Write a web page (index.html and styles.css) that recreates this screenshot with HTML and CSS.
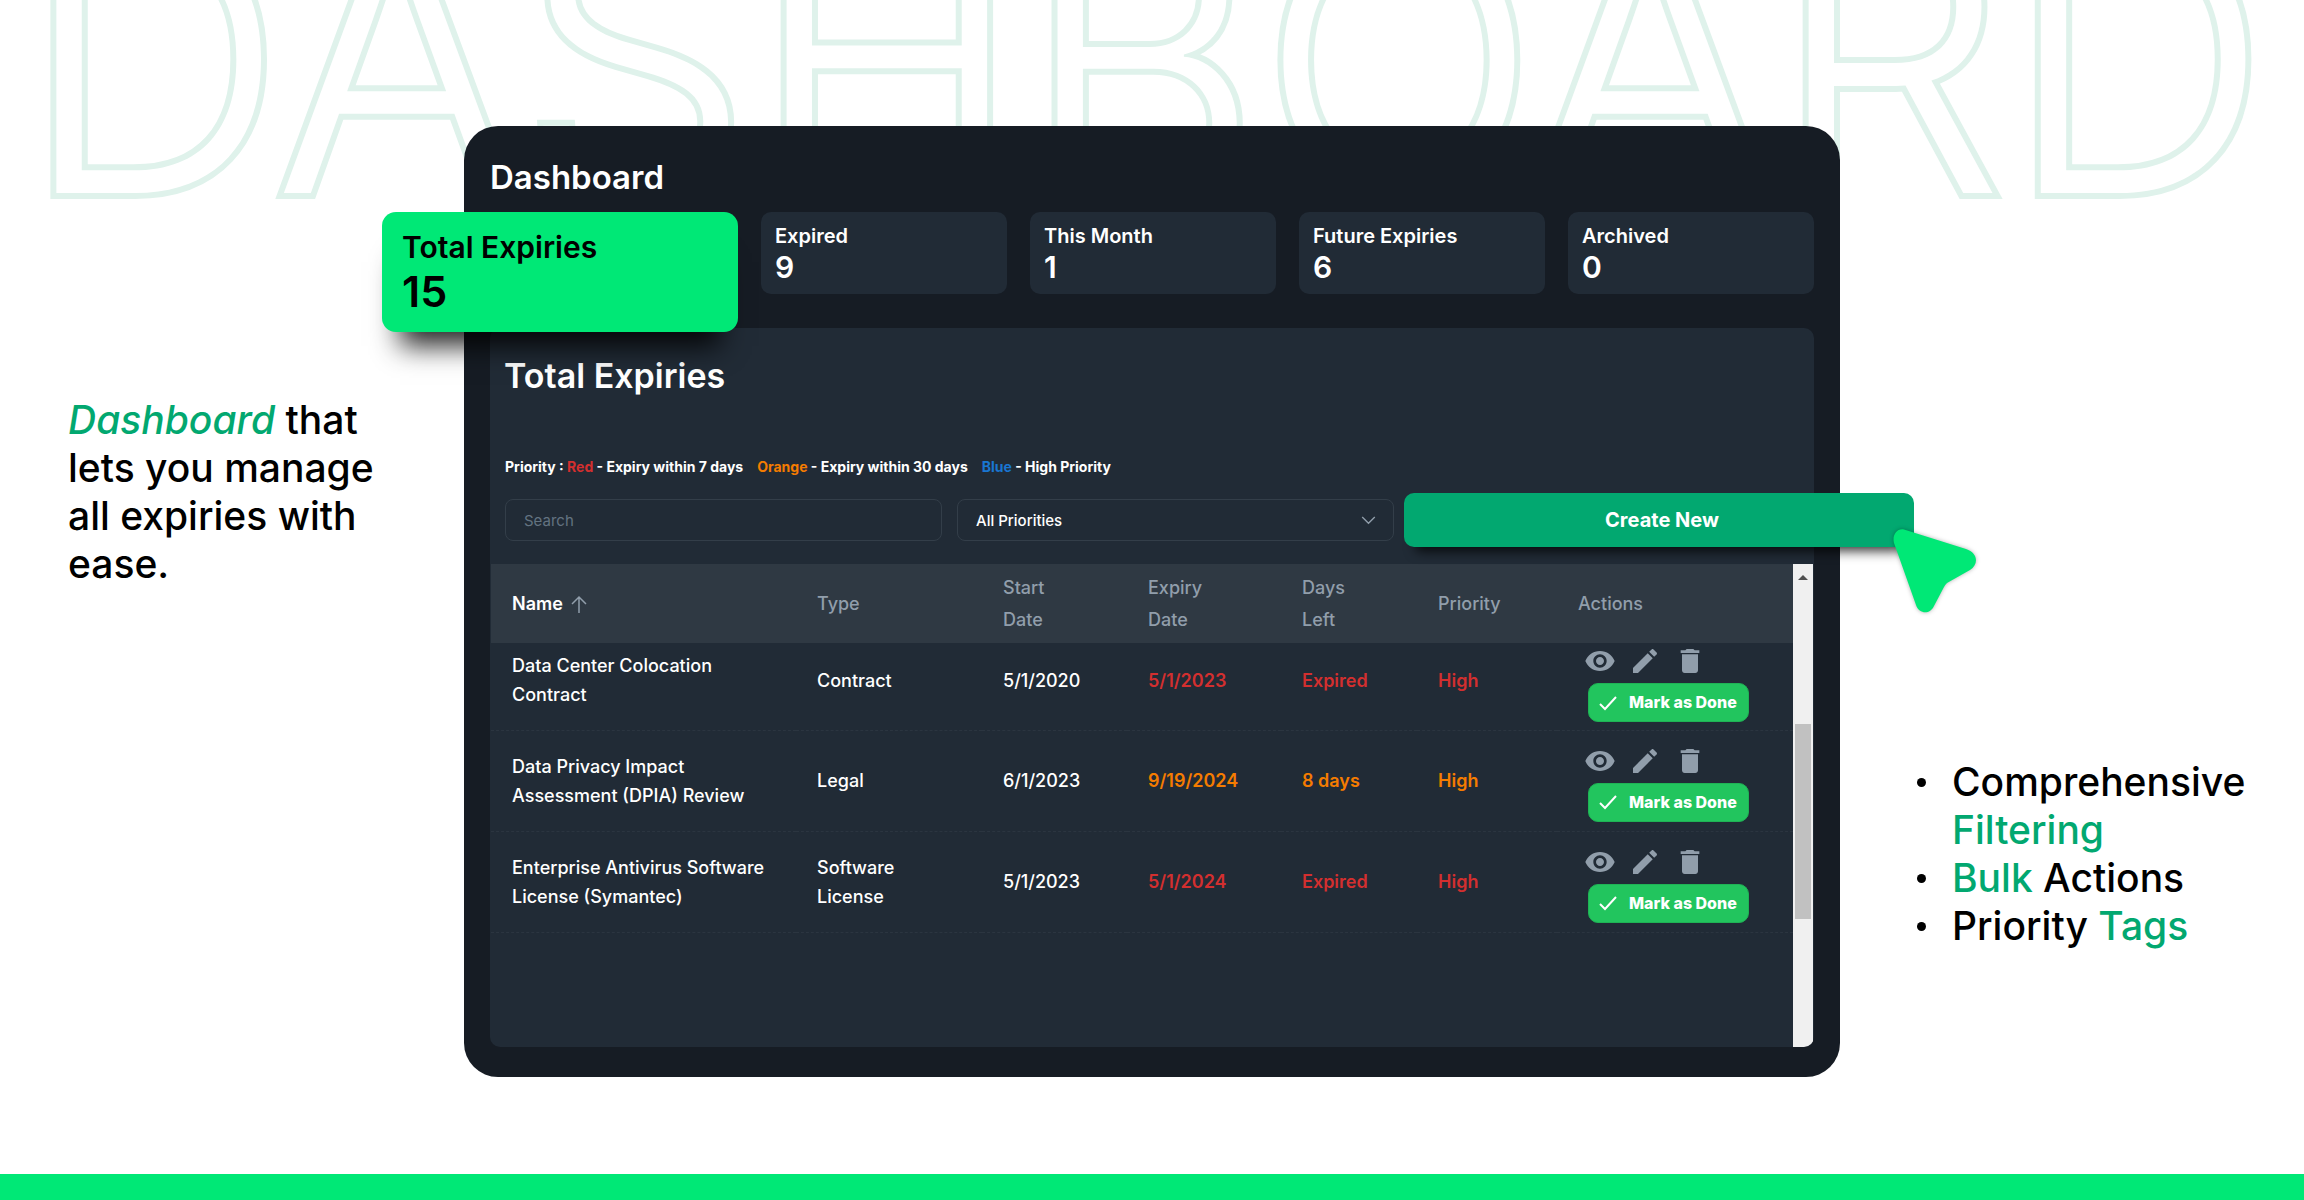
FILE: index.html
```html
<!DOCTYPE html>
<html lang="en">
<head>
<meta charset="utf-8">
<title>Dashboard</title>
<link rel="stylesheet" href="styles.css">
</head>
<body>
<svg class="sprite" aria-hidden="true">
  <symbol id="eye" viewBox="0 0 24 24"><path d="M12 4.500C7 4.500 2.730 7.610 1 12c1.730 4.390 6 7.500 11 7.500s9.270-3.110 11-7.500c-1.730-4.390-6-7.500-11-7.500zM12 17c-2.760 0-5-2.240-5-5s2.240-5 5-5 5 2.240 5 5-2.240 5-5 5zm0-8c-1.660 0-3 1.340-3 3s1.340 3 3 3 3-1.340 3-3-1.340-3-3-3z"/></symbol>
  <symbol id="pencil" viewBox="0 0 24 24"><path d="M3 17.250V21h3.750L17.810 9.940l-3.750-3.750L3 17.250zM20.710 7.040c.39-.39.39-1.020 0-1.410l-2.340-2.340c-.39-.39-1.020-.39-1.410 0l-1.830 1.830 3.750 3.750 1.830-1.830z"/></symbol>
  <symbol id="trash" viewBox="0 0 24 24"><path d="M6 19c0 1.100.9 2 2 2h8c1.100 0 2-.9 2-2V7H6v12zM19 4h-3.500l-1-1h-5l-1 1H5v2h14V4z"/></symbol>
  <symbol id="check" viewBox="0 0 18 18"><path d="M1 10l5 5L17 3" fill="none" stroke="currentColor" stroke-width="2"/></symbol>
</svg>
<div class="backdrop" aria-hidden="true">DASHBOARD</div>
<main class="stage">
  <p class="pitch"><em>Dashboard</em> that<br>lets you manage<br>all expiries with<br>ease.</p>

  <section class="app">
    <h1 class="app-title">Dashboard</h1>
    <div class="stats">
      <div class="stat stat-active"><span class="stat-label">Total Expiries</span><span class="stat-value">15</span></div>
      <div class="stat"><span class="stat-label">Expired</span><span class="stat-value">9</span></div>
      <div class="stat"><span class="stat-label">This Month</span><span class="stat-value">1</span></div>
      <div class="stat"><span class="stat-label">Future Expiries</span><span class="stat-value">6</span></div>
      <div class="stat"><span class="stat-label">Archived</span><span class="stat-value">0</span></div>
    </div>

    <div class="board">
      <h2 class="board-title">Total Expiries</h2>
      <p class="legend"><span>Priority : <span class="red">Red</span> - Expiry within 7 days</span><span><span class="orange">Orange</span> - Expiry within 30 days</span><span><span class="blue">Blue</span> - High Priority</span></p>
      <div class="toolbar">
        <input class="field" type="text" placeholder="Search" aria-label="Search">
        <div class="select-wrap">
          <select class="field" aria-label="Priority"><option>All Priorities</option></select>
          <svg class="chevron" viewBox="0 0 16 10"><path d="M1 1l7 7 7-7" fill="none" stroke="currentColor" stroke-width="1.500"/></svg>
        </div>
        <div class="create-wrap">
          <button class="create" type="button">Create New</button>
          <svg class="cursor" viewBox="0 0 84 84" aria-hidden="true"><path d="M11 0.500L73 20C85 24 86 35 77 41L54 54Q52 56 51 58L41 77C37 86 26 85 23 76L1 14C-1 6 4-1 11 .5z"/></svg>
        </div>
      </div>

      <div class="table-area">
        <table>
          <colgroup><col class="c-name"><col class="c-type"><col class="c-start"><col class="c-expiry"><col class="c-days"><col class="c-priority"><col class="c-actions"></colgroup>
          <thead>
            <tr>
              <th class="sorted">Name <svg class="arrow" viewBox="0 0 16 18"><path d="M8 18V2M1 9l7-7 7 7" fill="none" stroke="currentColor" stroke-width="1.500"/></svg></th>
              <th>Type</th><th>Start<br>Date</th><th>Expiry<br>Date</th><th>Days<br>Left</th><th>Priority</th><th>Actions</th>
            </tr>
          </thead>
          <tbody>
            <tr class="first">
              <td>Data Center Colocation<br>Contract</td><td>Contract</td><td>5/1/2020</td>
              <td class="red">5/1/2023</td><td class="red">Expired</td><td class="red">High</td>
              <td class="actions"><div class="icons"><button type="button" aria-label="View"><svg><use href="#eye"/></svg></button><button type="button" aria-label="Edit"><svg><use href="#pencil"/></svg></button><button type="button" aria-label="Delete"><svg><use href="#trash"/></svg></button></div><button class="done" type="button"><svg><use href="#check"/></svg>Mark as Done</button></td>
            </tr>
            <tr>
              <td>Data Privacy Impact<br>Assessment (DPIA) Review</td><td>Legal</td><td>6/1/2023</td>
              <td class="orange">9/19/2024</td><td class="orange">8 days</td><td class="orange">High</td>
              <td class="actions"><div class="icons"><button type="button" aria-label="View"><svg><use href="#eye"/></svg></button><button type="button" aria-label="Edit"><svg><use href="#pencil"/></svg></button><button type="button" aria-label="Delete"><svg><use href="#trash"/></svg></button></div><button class="done" type="button"><svg><use href="#check"/></svg>Mark as Done</button></td>
            </tr>
            <tr>
              <td>Enterprise Antivirus Software<br>License (Symantec)</td><td>Software<br>License</td><td>5/1/2023</td>
              <td class="red">5/1/2024</td><td class="red">Expired</td><td class="red">High</td>
              <td class="actions"><div class="icons"><button type="button" aria-label="View"><svg><use href="#eye"/></svg></button><button type="button" aria-label="Edit"><svg><use href="#pencil"/></svg></button><button type="button" aria-label="Delete"><svg><use href="#trash"/></svg></button></div><button class="done" type="button"><svg><use href="#check"/></svg>Mark as Done</button></td>
            </tr>
          </tbody>
        </table>
        <div class="scrollbar"><span class="scroll-up"></span><span class="scroll-thumb"></span></div>
      </div>
    </div>
  </section>

  <ul class="features">
    <li>Comprehensive <b>Filtering</b></li>
    <li><b>Bulk</b> Actions</li>
    <li>Priority <b>Tags</b></li>
  </ul>
</main>
<footer class="strip"></footer>
</body>
</html>
```
FILE: styles.css
```css
* { box-sizing: border-box; }

body {
  margin: 0;
  min-height: 100vh;
  display: flex;
  flex-direction: column;
  position: relative;
  overflow-x: hidden;
  background: #fff;
  color: #000;
  font-family: Inter, "Liberation Sans", sans-serif;
  font-weight: 500;
}

h1, h2, p, ul { margin: 0; padding: 0; }
button, input, select { font: inherit; color: inherit; }
button { border: 0; padding: 0; background: none; cursor: pointer; }
.sprite { display: none; }

.red { color: #d32f2f; }
.orange { color: #f57c00; }
.blue { color: #1976d2; }

/* Oversized outlined word behind the app */
.backdrop {
  position: absolute;
  top: -210px;
  left: 0;
  right: 14px;
  z-index: -1;
  text-align: center;
  white-space: nowrap;
  font-size: 366px;
  line-height: 540px;
  font-weight: 300;
  color: #fff;
  -webkit-text-stroke: 12px #dff2eb;
  paint-order: stroke fill;
}

.stage {
  flex: 1;
  display: grid;
  grid-template-columns: 464fr 1376fr 464fr;
  align-items: start;
  padding: 126px 0 80px;
}

.pitch, .features { font-size: 39px; line-height: 48px; }
.pitch { padding: 270px 0 0 68px; white-space: nowrap; }
.pitch em, .features b { color: #02a870; font-weight: 500; }
.features { padding: 632px 40px 0 76px; list-style: none; }
.features li { display: block; position: relative; padding-left: 36px; }
.features li::before {
  content: "";
  position: absolute;
  left: 1px;
  top: 20px;
  width: 9px;
  height: 9px;
  border-radius: 50%;
  background: #000;
}

/* App window */
.app {
  padding: 26px 26px 30px;
  border-radius: 34px;
  background: #161c24;
  color: #fff;
}
.app-title { padding-top: 1px; font-size: 33px; line-height: 48px; font-weight: 600; }

.stats {
  display: grid;
  grid-template-columns: 356fr repeat(4, 246fr);
  gap: 23px;
  align-items: start;
  margin: 11px 0 -4px -108px;
}
.stat {
  display: flex;
  flex-direction: column;
  height: 82px;
  padding: 9px 14px;
  border-radius: 10px;
  background: #212b36;
  font-weight: 600;
}
.stat-label { font-size: 20px; line-height: 31px; }
.stat-value { font-size: 30px; line-height: 30px; }
.stat-active {
  position: relative;
  z-index: 1;
  height: 120px;
  padding: 13px 20px;
  border-radius: 14px;
  background: #00e876;
  color: #000;
  box-shadow: 0 32px 26px -18px rgba(0, 0, 0, .85);
}
.stat-active .stat-label { font-size: 30px; line-height: 44px; }
.stat-active .stat-value { font-size: 43px; line-height: 44px; }

/* Expiries board */
.board { border-radius: 10px; background: #212b36; }
.board-title { padding: 24px 14px 0; font-size: 34px; line-height: 48px; font-weight: 600; }
.legend {
  display: flex;
  gap: 14px;
  padding: 55px 15px 0;
  font-size: 14px;
  line-height: 24px;
  font-weight: 700;
}
.toolbar {
  display: grid;
  grid-template-columns: 437fr 437fr 505fr;
  gap: 15px;
  align-items: center;
  margin: 14px -100px 17px 15px;
}
.field {
  width: 100%;
  height: 42px;
  padding: 0 18px;
  border: 1px solid #333e49;
  border-radius: 8px;
  background: transparent;
  font-size: 15px;
  font-weight: 400;
  appearance: none;
}
.field::placeholder { color: #637381; }
select.field { font-weight: 500; }
.select-wrap { position: relative; }
.chevron {
  position: absolute;
  right: 18px;
  top: 17px;
  width: 15px;
  height: 9px;
  color: #919eab;
  pointer-events: none;
}
.create-wrap { position: relative; margin-left: -5px; }
.create {
  display: block;
  width: 100%;
  height: 54px;
  padding-left: 6px;
  border-radius: 10px;
  background: #02a870;
  font-size: 20px;
  font-weight: 700;
  box-shadow: 0 16px 12px -12px rgba(0, 0, 0, .8);
}
.cursor {
  position: absolute;
  right: -63px;
  top: 36px;
  width: 84px;
  height: 84px;
  fill: #00e876;
  filter: drop-shadow(0 0 2px rgba(0, 0, 0, .3));
}

/* Table */
.table-area {
  display: flex;
  min-height: 483px;
  padding: 0 1px;
  border-radius: 0 0 10px 10px;
  overflow: hidden;
  align-items: stretch;
}
table {
  flex: 1;
  align-self: flex-start;
  table-layout: fixed;
  border-collapse: collapse;
  font-size: 18px;
  line-height: 29px;
}
.c-name { width: 305px; }
.c-type { width: 186px; }
.c-start { width: 145px; }
.c-expiry { width: 154px; }
.c-days { width: 136px; }
.c-priority { width: 140px; }
.c-actions { width: auto; }
th, td { padding: 0 0 0 21px; text-align: left; white-space: nowrap; }
th {
  height: 79px;
  background: #2f3943;
  color: #919eab;
  font-weight: 500;
  line-height: 32px;
}
.sorted { color: #fff; font-weight: 600; }
.arrow { width: 16px; height: 18px; margin-left: 4px; vertical-align: -3px; color: #919eab; }
td {
  height: 101px;
  border-bottom: 1px dashed #2b3540;
}
td.red, td.orange { font-weight: 600; }
.first td { height: 87px; padding-bottom: 12px; }
.actions { padding: 14px 0 9px 27px; }
.first .actions { padding: 2px 0 7px 27px; }
.icons { display: flex; gap: 13px; height: 32px; margin-bottom: 6px; }
.icons button { width: 32px; height: 32px; color: #919eab; }
.icons svg { display: block; width: 32px; height: 32px; fill: currentColor; }
.done {
  display: flex;
  align-items: center;
  gap: 12px;
  height: 39px;
  margin-left: 4px;
  padding: 0 11px 0 10px;
  border: 1px solid #1fb355;
  border-radius: 10px;
  background: #22c55e;
  font-size: 16px;
  font-weight: 800;
}
.done svg { width: 18px; height: 18px; }

.scrollbar {
  display: flex;
  flex-direction: column;
  width: 20px;
  padding: 11px 2px 0;
  background: #f0f0f0;
}
.scroll-up {
  align-self: center;
  border: 5px solid transparent;
  border-top-width: 0;
  border-bottom-color: #505050;
}
.scroll-thumb { height: 195px; margin-top: 144px; background: #c1c1c1; }

.strip { height: 26px; background: #00e876; }
```
